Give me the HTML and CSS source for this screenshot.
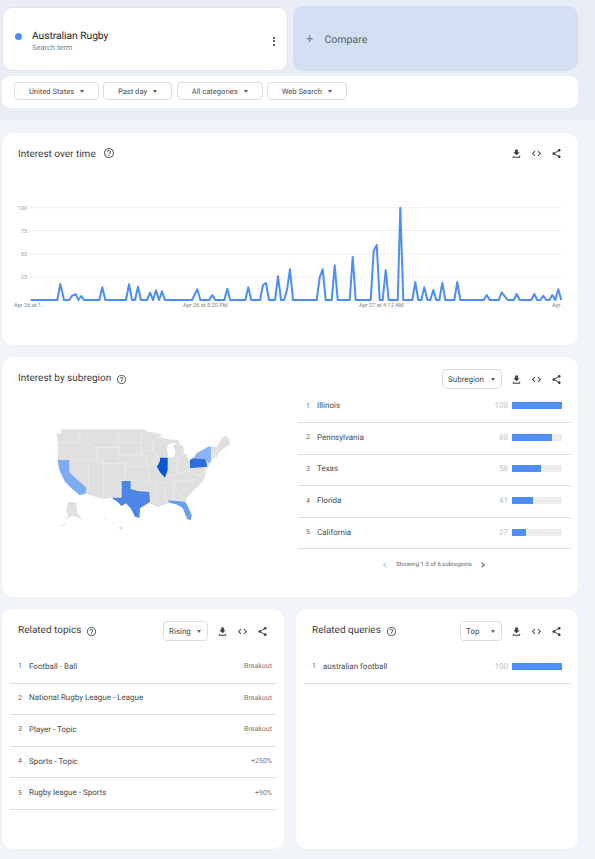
FILE: index.html
```html
<!DOCTYPE html>
<html lang="en">
<head>
  <meta charset="UTF-8" />
  <title>Australian Rugby - Explore - Google Trends</title>
  <link rel="stylesheet" href="styles.css">
</head>
<body>

  <svg class="defs">
    <symbol id="i-download" viewBox="0 0 24 24"><path d="M19 9h-4V3H9v6H5l7 7 7-7zM4 17v4h16v-4h-2v2H6v-2z"/></symbol>
    <symbol id="i-code" viewBox="0 0 24 24"><path d="M9.4 16.6L4.8 12l4.6-4.6L8 6l-6 6 6 6 1.4-1.4zm5.2 0l4.6-4.6-4.6-4.6L16 6l6 6-6 6-1.4-1.4z"/></symbol>
    <symbol id="i-share" viewBox="0 0 24 24"><path d="M18 16.08c-.76 0-1.44.3-1.96.77L8.91 12.7c.05-.23.09-.46.09-.7s-.04-.47-.09-.7l7.05-4.11c.54.5 1.25.81 2.04.81 1.66 0 3-1.34 3-3s-1.34-3-3-3-3 1.34-3 3c0 .24.04.47.09.7L8.04 9.81C7.5 9.31 6.79 9 6 9c-1.66 0-3 1.34-3 3s1.34 3 3 3c.79 0 1.5-.31 2.04-.81l7.12 4.16c-.05.21-.08.43-.08.65 0 1.61 1.31 2.92 2.92 2.92s2.92-1.31 2.92-2.92-1.31-2.92-2.92-2.92z"/></symbol>
    <symbol id="i-help" viewBox="0 0 24 24"><path d="M11 18h2v-2h-2v2zm1-16C6.48 2 2 6.48 2 12s4.48 10 10 10 10-4.48 10-10S17.52 2 12 2zm0 18c-4.41 0-8-3.59-8-8s3.59-8 8-8 8 3.59 8 8-3.59 8-8 8zm0-14c-2.21 0-4 1.79-4 4h2c0-1.1.9-2 2-2s2 .9 2 2c0 2-3 1.75-3 5h2c0-2.25 3-2.5 3-5 0-2.21-1.79-4-4-4z"/></symbol>
  </svg>

  <header class="top">
    <div class="terms">
      <div class="term">
        <span class="term-dot"></span>
        <div class="term-text">
          <div class="term-name">Australian Rugby</div>
          <div class="term-sub">Search term</div>
        </div>
        <span class="kebab"><i></i><i></i><i></i></span>
      </div>
      <div class="compare">
        <span class="compare-plus">+</span>
        <span>Compare</span>
      </div>
    </div>
    <div class="filters">
      <div class="pill pill-geo">United States <span class="caret"></span></div>
      <div class="pill pill-time">Past day <span class="caret"></span></div>
      <div class="pill pill-cat">All categories <span class="caret"></span></div>
      <div class="pill pill-type">Web Search <span class="caret"></span></div>
    </div>
  </header>

  <main class="page">

    <section class="card card-time">
      <div class="head head-time">
        <h3>Interest over time</h3>
        <svg class="help help-big"><use href="#i-help"/></svg>
        <div class="actions">
          <svg><use href="#i-download"/></svg>
          <svg><use href="#i-code"/></svg>
          <svg><use href="#i-share"/></svg>
        </div>
      </div>
      <svg class="chart" viewBox="2 163 576 160">
        <g class="grid">
          <line x1="30" y1="207.7" x2="562" y2="207.7"/>
          <line x1="30" y1="230.5" x2="562" y2="230.5"/>
          <line x1="30" y1="254" x2="562" y2="254"/>
          <line x1="30" y1="277" x2="562" y2="277"/>
          <line x1="30" y1="300" x2="562" y2="300"/>
        </g>
        <g class="y-labels">
          <text x="27" y="209.5">100</text>
          <text x="27" y="232.5">75</text>
          <text x="27" y="256">50</text>
          <text x="27" y="279">25</text>
        </g>
        <g class="x-labels">
          <text x="14" y="307">Apr 26 at 1...</text>
          <text x="183" y="307">Apr 26 at 8:20 PM</text>
          <text x="359" y="307">Apr 27 at 4:12 AM</text>
          <text x="552" y="307">Apr...</text>
        </g>
        <polyline class="trend" points="30.7,300 57.3,300 60.3,284 64,300 69.3,300 72,295.7 76,294.3 78.3,300 81.3,296 84,300 99.3,300 102.3,287.3 105.3,300 126,300 129,284.3 132,300 135,300 138,286.7 141,300 147,300 150,292.7 153,300 156,290.3 159,300 162,291.3 165,300 192,300 197.3,289.3 200.3,300 209.3,300 212.3,295 215.3,300 224.3,300 227.3,288.7 230.3,300 245.3,300 248.3,287.3 251.3,300 260,300 263,285 266,283 269,300 275,300 278,276.3 281,300 284,300 287,290 290,269.3 293,300 316.7,300 319.7,277.3 322.7,269.3 325.7,300 331.7,300 334.7,265.3 337.7,300 349.7,300 352.7,257 355.7,300 370.7,300 373.7,250.7 376.7,245 379.7,300 382.7,300 385.7,270 388.7,300 397.7,300 400.3,207.7 403.3,300 412.3,300 415.3,282 418.3,300 421.3,300 424.3,287.3 427.3,300 430.3,300 433.3,290 436.3,300 439.3,300 442.3,282.7 445.3,300 454.3,300 457.3,282 460.3,300 483.7,300 486.7,295 489.7,300 498.7,300 501.7,292.3 507.7,300 513.7,300 516.7,294 519.7,300 531.3,300 534.3,294 537.3,300 540.3,300 543.3,295.7 546.3,300 549.3,300 552.3,295 555.3,300 558.3,289.3 561.3,300"/>
      </svg>
    </section>

    <section class="card card-region">
      <div class="region-left">
        <div class="head">
          <h3>Interest by subregion</h3>
          <svg class="help"><use href="#i-help"/></svg>
        </div>
        <svg class="map" viewBox="0 0 600 375">
          <g class="land">
            <path d="M50,38 L62,42 L64,28 L235,28 L300,28 L320,30 L322,36 L345,38 L368,44 L345,58 L362,52 L385,58 L415,60 L420,68 L398,70 L388,70 L380,85 L386,112 L402,112 L406,95 L400,75 L415,68 L430,80 L433,95 L427,106 L438,100 L445,120 L458,115 L470,98 L497,85 L505,80 L530,80 L545,55 L555,48 L565,52 L570,72 L548,88 L535,100 L532,110 L515,118 L510,130 L502,148 L496,140 L497,165 L490,182 L468,205 L442,232 L436,245 L455,285 L452,300 L442,298 L428,264 L412,254 L385,247 L380,252 L352,262 L335,252 L330,248 L300,265 L298,293 L285,290 L272,265 L258,250 L245,258 L232,245 L215,233 L190,238 L140,222 L118,225 L95,205 L75,185 L58,150 L53,120 L55,85 Z"/>
            <path d="M85,245 L108,247 L112,280 L130,300 L110,290 L95,288 L75,300 L85,285 L78,270 L82,258 Z"/>
            <path d="M60,322 L78,310 L72,318 Z"/>
            <path d="M190,290 L200,294 L196,296 Z"/>
            <path d="M240,318 L248,323 L246,330 L237,326 Z"/>
            <path d="M218,306 L226,308 L224,311 Z"/>
          </g>
          <path class="borders" d="M55,68 H120 M120,28 V68 M135,28 L145,70 L172,90 V120 H145 M88,120 H145 M145,120 V205 L135,208 M88,120 V157 M145,180 H330 M190,120 V238 M172,82 H235 M235,28 V130 M172,130 H255 V180 M235,68 H305 M235,105 H315 M255,140 H325 M305,28 V105 M340,60 L340,90 L355,110 M310,90 H342 M315,105 L325,140 M355,113 L325,140 L330,180 M330,185 H355 M245,180 V233 M272,183 V210 L330,215 V250 M350,190 V250 M375,190 V245 M400,190 V240 M352,190 L440,180 M372,172 L450,150 M412,116 V165 M450,118 V145 L470,165 L497,160 M440,185 L492,170 M430,200 L450,212 M400,195 L432,240 M390,240 H430 M515,88 V122 M530,80 L525,110 M512,105 H532"/>
          <g class="states">
            <path class="st-ny" d="M462,115 L470,100 L497,85 L505,80 L513,80 L513,125 L505,128 L497,118 L458,115 Z"/>
            <path class="st-ca" d="M53,120 L88,120 L88,157 L140,205 L135,222 L118,225 L95,205 L75,185 L58,150 Z"/>
            <path class="st-fl" d="M385,241 L432,245 L438,248 L455,285 L452,300 L442,298 L428,264 L412,254 L385,247 Z"/>
            <path class="st-tx" d="M245,183 L272,183 L272,207 L295,213 L328,216 L330,245 L300,265 L298,293 L285,290 L272,265 L258,250 L245,258 L232,245 L215,233 L245,233 Z"/>
            <path class="st-pa" d="M450,120 L458,115 L497,118 L502,140 L450,145 Z"/>
            <path class="st-il" d="M360,113 L383,113 L383,150 L375,173 L360,157 L351,140 L360,123 Z"/>
          </g>
        </svg>
      </div>
      <div class="region-right">
        <div class="head head-right">
          <div class="select select-region">Subregion <span class="caret"></span></div>
          <div class="actions">
            <svg><use href="#i-download"/></svg>
            <svg><use href="#i-code"/></svg>
            <svg><use href="#i-share"/></svg>
          </div>
        </div>
        <div class="rows">
          <div class="row"><span class="num">1</span><span class="label">Illinois</span><span class="val">100</span><span class="bar"><span class="fill" style="width:100%"></span></span></div>
          <div class="row"><span class="num">2</span><span class="label">Pennsylvania</span><span class="val">80</span><span class="bar"><span class="fill" style="width:80%"></span></span></div>
          <div class="row"><span class="num">3</span><span class="label">Texas</span><span class="val">58</span><span class="bar"><span class="fill" style="width:58%"></span></span></div>
          <div class="row"><span class="num">4</span><span class="label">Florida</span><span class="val">41</span><span class="bar"><span class="fill" style="width:42%"></span></span></div>
          <div class="row"><span class="num">5</span><span class="label">California</span><span class="val">27</span><span class="bar"><span class="fill" style="width:28%"></span></span></div>
        </div>
        <div class="pager">
          <span class="chev chev-left"></span>
          <span>Showing 1-5 of 6 subregions</span>
          <span class="chev chev-right"></span>
        </div>
      </div>
    </section>

    <div class="pair">
      <section class="card card-half">
        <div class="head">
          <h3>Related topics</h3>
          <svg class="help"><use href="#i-help"/></svg>
          <div class="select select-rising">Rising <span class="caret"></span></div>
          <div class="actions">
            <svg><use href="#i-download"/></svg>
            <svg><use href="#i-code"/></svg>
            <svg><use href="#i-share"/></svg>
          </div>
        </div>
        <div class="rows rows-related">
          <div class="row"><span class="num">1</span><span class="label">Football - Ball</span><span class="rise">Breakout</span></div>
          <div class="row"><span class="num">2</span><span class="label">National Rugby League - League</span><span class="rise">Breakout</span></div>
          <div class="row"><span class="num">3</span><span class="label">Player - Topic</span><span class="rise">Breakout</span></div>
          <div class="row"><span class="num">4</span><span class="label">Sports - Topic</span><span class="rise">+250%</span></div>
          <div class="row"><span class="num">5</span><span class="label">Rugby league - Sports</span><span class="rise">+90%</span></div>
        </div>
      </section>

      <section class="card card-half">
        <div class="head">
          <h3>Related queries</h3>
          <svg class="help"><use href="#i-help"/></svg>
          <div class="select select-top">Top <span class="caret"></span></div>
          <div class="actions">
            <svg><use href="#i-download"/></svg>
            <svg><use href="#i-code"/></svg>
            <svg><use href="#i-share"/></svg>
          </div>
        </div>
        <div class="rows rows-related">
          <div class="row"><span class="num">1</span><span class="label">australian football</span><span class="val">100</span><span class="bar"><span class="fill" style="width:100%"></span></span></div>
        </div>
      </section>
    </div>

  </main>

</body>
</html>
```

FILE: styles.css
```css
* {
  box-sizing: border-box;
}

html, body {
  height: 859px;
  overflow: hidden;
}

body {
  margin: 0;
  font-family: Roboto, "Liberation Sans", sans-serif;
  text-rendering: geometricPrecision;
  background: #f0f4f9;
  color: #3c4043;
}

.defs {
  display: none;
}

/* top bar with search term and filters */
.top {
  height: 120px;
  background: #e9eef6;
  padding: 6px 17px 0 2px;
}

.terms {
  display: flex;
  gap: 5px;
  height: 65px;
}

.term {
  flex: 0 0 286px;
  margin-top: 1px;
  display: flex;
  align-items: center;
  padding: 4px 12px 0 12px;
  background: #fff;
  border: 1px solid #dfe3ea;
  border-radius: 10px;
}

.term-dot {
  width: 7px;
  height: 7px;
  border-radius: 50%;
  background: #4f8df7;
  margin: 0 10px 10px 0;
}

.term-text {
  flex: 1;
}

.term-name {
  font-size: 10.2px;
  line-height: 13px;
  color: #202124;
}

.term-sub {
  font-size: 7.5px;
  line-height: 10px;
  color: #80868b;
}

.kebab {
  display: flex;
  flex-direction: column;
  gap: 1.5px;
  margin: 0;
}

.kebab i {
  width: 2px;
  height: 2px;
  background: #5f6368;
}

.compare {
  flex: 1;
  display: flex;
  align-items: center;
  gap: 11px;
  padding-left: 13px;
  background: #d3e0f3;
  border-radius: 10px;
  font-size: 10.6px;
  color: #5f6368;
  padding-top: 2px;
}

.compare-plus {
  font-size: 13px;
  color: #7b8187;
}

.filters {
  display: flex;
  align-items: center;
  height: 32px;
  margin-top: 5px;
  padding-left: 12px;
  padding-bottom: 2px;
  background: #fff;
  border-radius: 8px;
}

.pill {
  display: flex;
  align-items: center;
  justify-content: center;
  gap: 6px;
  height: 18px;
  border: 1px solid #dadce0;
  border-radius: 4px;
  font-size: 7.6px;
  color: #4a4e52;
}

.pill-geo { width: 85px; margin-right: 4px; }
.pill-time { width: 69px; margin-right: 5px; }
.pill-cat { width: 85.5px; margin-right: 4px; }
.pill-type { width: 80.5px; }

.caret {
  display: inline-block;
  border-left: 2.5px solid transparent;
  border-right: 2.5px solid transparent;
  border-top: 3px solid #5f6368;
}

/* result cards */
.page {
  padding: 13px 17px 0 2px;
}

.card {
  background: #fff;
  border-radius: 12px;
}

.card-time {
  height: 212px;
  padding-top: 10px;
}

.head {
  display: flex;
  align-items: center;
  height: 20px;
  padding-left: 16px;
  padding-right: 16px;
}

h3 {
  margin: 0 0 2px;
  font-size: 10px;
  font-weight: 400;
  color: #3c4043;
}

.head-time h3 {
  margin: 2px 0 0;
}

.help {
  width: 11px;
  height: 11px;
  margin-left: 5px;
  fill: #5f6368;
}

.help-big {
  width: 12px;
  height: 12px;
  margin-left: 7px;
}

.actions {
  display: flex;
  gap: 9px;
  margin-left: auto;
  fill: #3c4043;
}

.actions svg {
  width: 11px;
  height: 11px;
}

.chart {
  display: block;
  width: 576px;
  height: 160px;
}

.grid line {
  stroke: #eef0f2;
  stroke-width: 1;
}

.y-labels text {
  font-size: 5.5px;
  fill: #9aa0a6;
  text-anchor: end;
}

.x-labels text {
  font-size: 5.6px;
  fill: #80868b;
}

.trend {
  fill: none;
  stroke: #4c8df6;
  stroke-width: 2;
  stroke-linejoin: round;
}

/* subregion card */
.card-region {
  display: flex;
  height: 240px;
  margin-top: 12px;
  padding-top: 12px;
}

.region-left {
  width: 296px;
}

.region-right {
  width: 273px;
}

.head-right {
  padding: 0 9px 0 0;
}

.map {
  display: block;
  width: 200px;
  height: 125px;
  margin: 31px 0 0 38px;
}

.land path {
  fill: #e0e0e0;
}

.borders {
  fill: none;
  stroke: #f4f4f4;
  stroke-width: 1.6;
}

.st-il { fill: #0b57d0; }
.st-pa { fill: #2a6fdd; }
.st-tx { fill: #4f86e6; }
.st-fl { fill: #6a9fef; }
.st-ca { fill: #7dabf4; }
.st-ny { fill: #8ab4f8; }

.select {
  display: flex;
  align-items: center;
  justify-content: space-between;
  height: 20px;
  padding: 0 6px 0 5px;
  border: 1px solid #dadce0;
  border-radius: 4px;
  font-size: 8px;
  color: #4a4e52;
}

.select-region {
  width: 60px;
  margin-left: auto;
}

.select-rising {
  width: 45px;
  margin-left: auto;
}

.select-top {
  width: 42px;
  margin-left: auto;
}

.select + .actions {
  margin-left: 9px;
}

.row {
  display: flex;
  align-items: center;
  height: 31.6px;
  padding: 0 9px 2px 8px;
  border-bottom: 1px solid #e0e0e0;
  font-size: 8px;
}

.rows {
  margin-top: 2.5px;
}

.num {
  width: 11px;
  font-size: 7px;
  color: #5f6368;
}

.label {
  flex: 1;
  color: #4a4e52;
}

.val {
  margin-right: 4px;
  font-size: 8px;
  color: #bdc1c6;
}

.bar {
  width: 50px;
  height: 7px;
  background: #ececec;
}

.fill {
  display: block;
  height: 7px;
  background: #4f8df7;
}

.pager {
  display: flex;
  align-items: center;
  justify-content: center;
  gap: 8px;
  height: 31px;
  padding-right: 1px;
  font-size: 6px;
  color: #5f6368;
}

.chev {
  width: 4px;
  height: 4px;
  border-top: 1px solid #5f6368;
  border-right: 1px solid #5f6368;
}

.chev-left {
  border-color: #c4c7cc;
  transform: rotate(-135deg);
}

.chev-right {
  transform: rotate(45deg);
}

/* related topics and queries */
.pair {
  display: flex;
  gap: 12px;
  margin-top: 12px;
}

.card-half {
  flex: 1;
  height: 240px;
  padding-top: 12px;
}

.rows-related {
  margin: 11px 7px 0 8px;
}

.rows-related .row {
  padding-right: 9px;
  padding-left: 8px;
}

.rise {
  font-size: 7px;
  color: #80756e;
  margin-right: -4px;
}
```
